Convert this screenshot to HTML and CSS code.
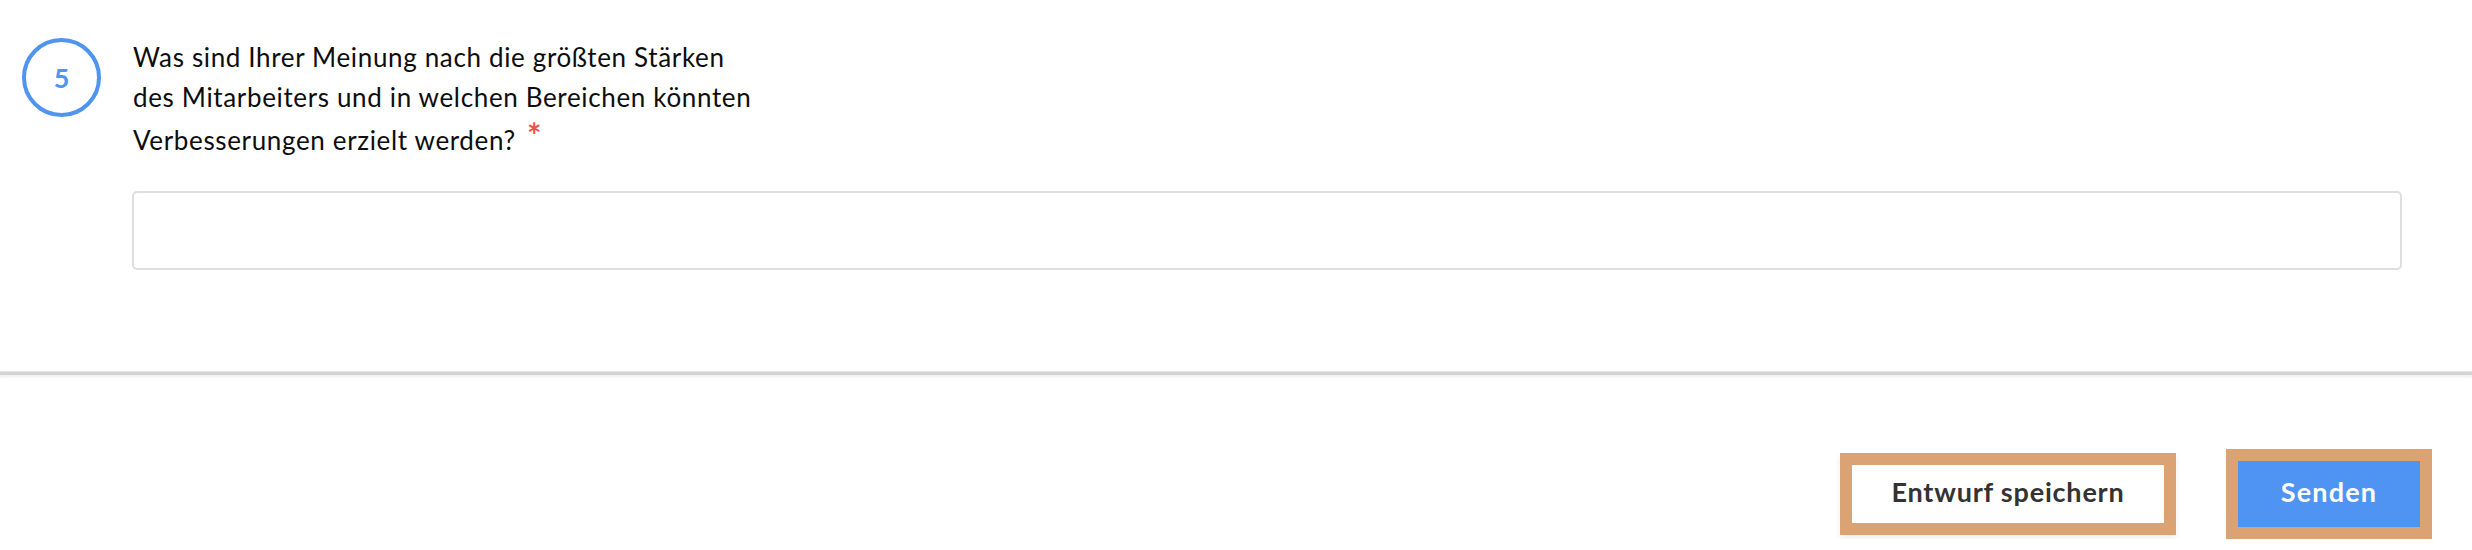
FILE: index.html
```html
<!DOCTYPE html>
<html lang="de">
<head>
<meta charset="utf-8">
<title>Frage 5</title>
<link rel="stylesheet" href="styles.css">
</head>
<body>
<section class="question">
  <div class="question-row">
    <div class="number">5</div>
    <p class="question-text">Was sind Ihrer Meinung nach die größten Stärken<br>des Mitarbeiters und in welchen Bereichen könnten<br>Verbesserungen erzielt werden? <span class="required">*</span></p>
  </div>
  <div class="answer"><input class="answer-input" type="text" aria-label="Antwort"></div>
</section>
<div class="divider"></div>
<footer class="actions">
  <button class="btn btn-draft" type="button">Entwurf speichern</button>
  <button class="btn btn-send" type="button">Senden</button>
</footer>
</body>
</html>
```
FILE: styles.css
```css
html, body {
  margin: 0;
  padding: 0;
  background: #ffffff;
  font-family: Lato, "Open Sans", "Liberation Sans", sans-serif;
}

.question {
  padding: 37px 70px 101px 22px;
}

.question-row {
  display: flex;
  align-items: flex-start;
  gap: 32px;
}

.number {
  flex: none;
  width: 71px;
  height: 71px;
  margin-top: 1px;
  border: 4px solid #4f94f0;
  border-radius: 50%;
  display: flex;
  align-items: center;
  justify-content: center;
  color: #4f94f0;
  font-size: 27px;
  font-weight: 700;
}

.question-text {
  margin: 0;
  font-size: 26px;
  line-height: 40px;
  letter-spacing: 0.65px;
  color: #0d0d0d;
}

.required {
  color: #e8544b;
  font-size: 34px;
  font-weight: 700;
  position: relative;
  top: -2px;
  margin-left: 4px;
}

.answer {
  margin: 31px 0 0 110px;
}

.answer-input {
  display: block;
  box-sizing: border-box;
  width: 100%;
  height: 79px;
  border: 2px solid #dedede;
  border-radius: 5px;
  background: #ffffff;
  margin: 0;
  padding: 0 16px;
  font-family: inherit;
  font-size: 24px;
}

.divider {
  height: 3px;
  border-top: 1px solid #e6e6e6;
  background: #d4d4d4;
  box-shadow: 0 2px 3px rgba(0, 0, 0, 0.07);
}

.actions {
  display: flex;
  justify-content: flex-end;
  align-items: center;
  gap: 50px;
  padding: 74px 40px 0 0;
}

.btn {
  box-sizing: border-box;
  border: 12px solid #dba274;
  margin: 0;
  padding: 0 0 5px;
  font-family: inherit;
  font-size: 27px;
  font-weight: 700;
  letter-spacing: 0.8px;
  cursor: pointer;
}

.btn-draft {
  width: 336px;
  height: 82px;
  background: #ffffff;
  color: #333333;
  box-shadow: 0 3px 6px rgba(0, 0, 0, 0.08);
}

.btn-send {
  width: 206px;
  height: 90px;
  background: #4f94f2;
  color: #ffffff;
  letter-spacing: 1.2px;
}
```
